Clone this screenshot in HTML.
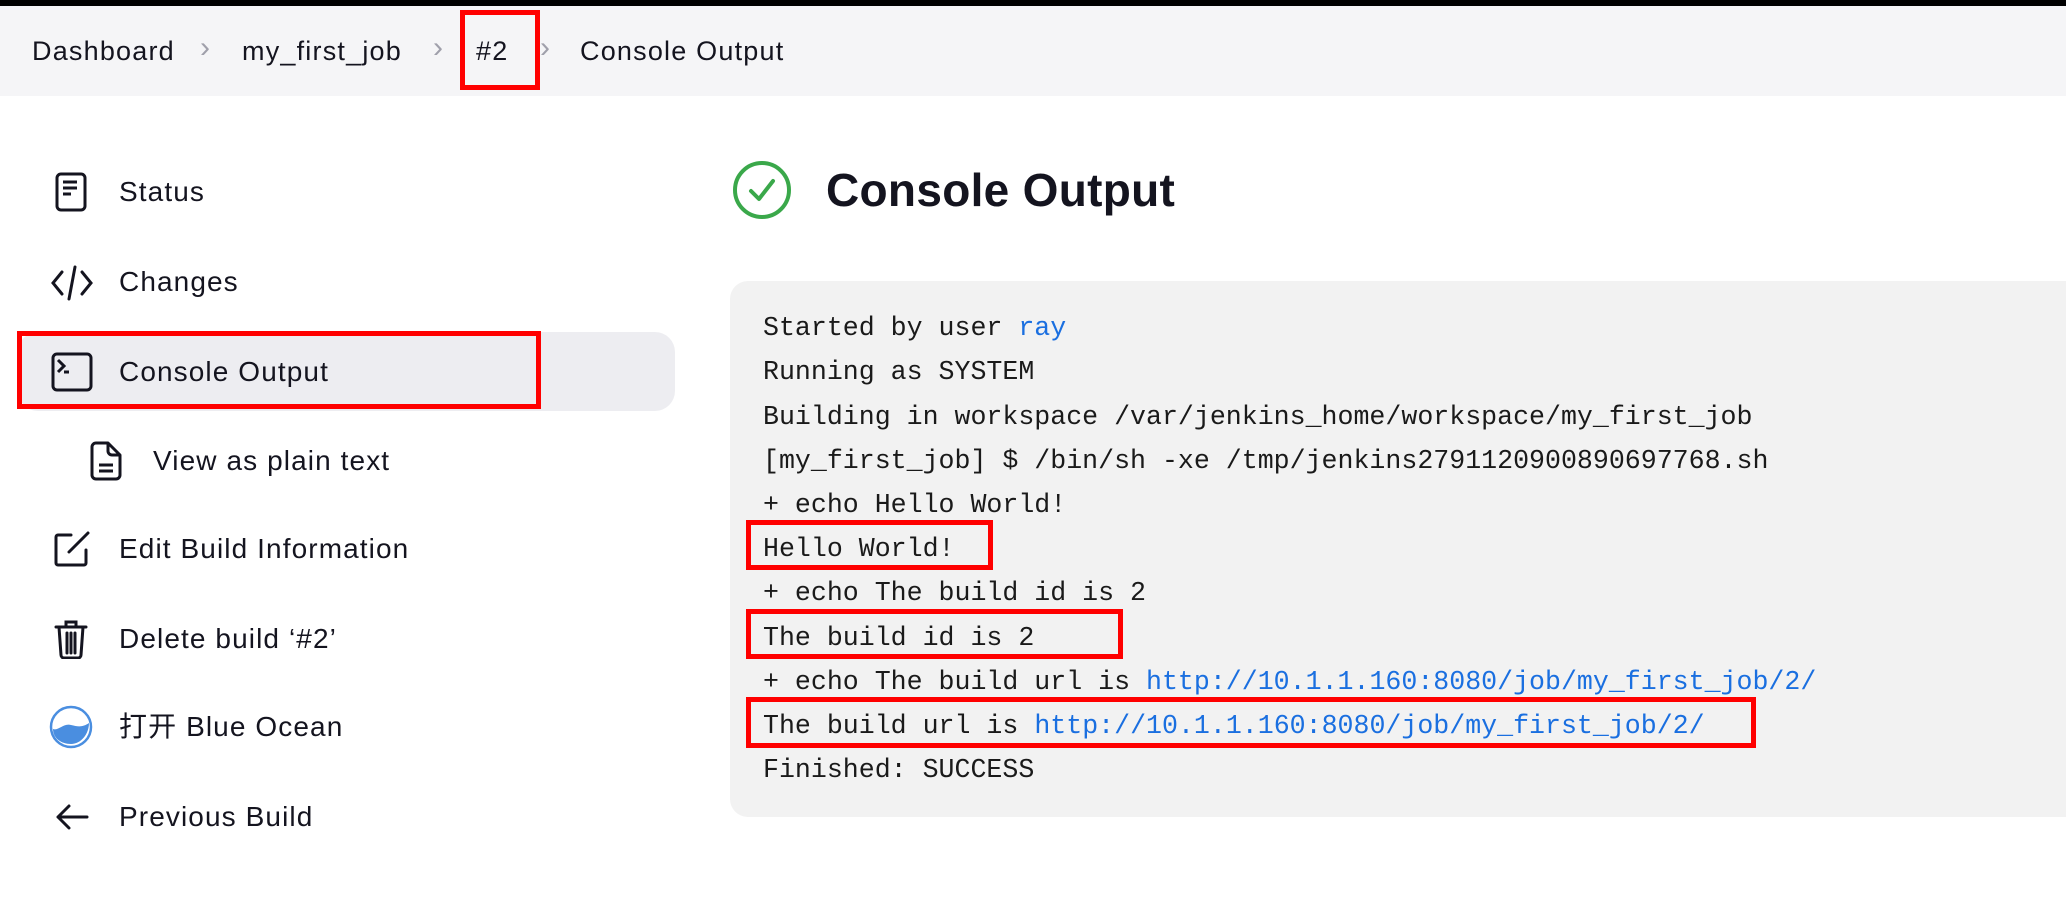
<!DOCTYPE html>
<html><head><meta charset="utf-8"><style>
*{margin:0;padding:0;box-sizing:border-box}
body{width:2066px;height:924px;background:#fff;position:relative;overflow:hidden;font-family:"Liberation Sans","Noto Sans CJK SC",sans-serif;color:#14141f}
.abs{position:absolute}
.top{left:0;top:0;width:2066px;height:6px;background:#000}
.bc{left:0;top:6px;width:2066px;height:90px;background:#f5f5f7}
.bct{font-size:27px;top:36px;position:absolute;line-height:30px;letter-spacing:1.2px}
.chev{color:#a0a0ab;font-size:30px;letter-spacing:0}
.red{position:absolute;border:5px solid #f00}
.item{position:absolute;left:119px;font-size:28px;line-height:34px;letter-spacing:1.1px}
.ico{position:absolute}
.cons{left:730px;top:281px;width:1400px;height:536px;background:#f2f2f2;border-radius:18px}
.ln{position:absolute;left:763px;font-family:"Liberation Mono","DejaVu Sans Mono",monospace;font-size:26.6px;line-height:30px;white-space:pre;color:#1a1a1a}
a{color:#1a6fe0;text-decoration:none}
</style></head><body>
<div class="abs top"></div>
<div class="abs bc"></div>
<div class="bct" style="left:32px">Dashboard</div>
<div class="bct chev" style="left:200px;top:33px">›</div>
<div class="bct" style="left:242px">my_first_job</div>
<div class="bct chev" style="left:433px;top:33px">›</div>
<div class="bct" style="left:476px">#2</div>
<div class="bct chev" style="left:540px;top:33px">›</div>
<div class="bct" style="left:580px">Console Output</div>
<div class="red" style="left:460px;top:10px;width:80px;height:80px"></div>

<div class="abs" style="left:18px;top:332px;width:657px;height:79px;background:#ededf1;border-radius:20px"></div>
<div class="red" style="left:17px;top:331px;width:524px;height:78px"></div>

<svg class="ico" style="left:55px;top:172px" width="32" height="40" viewBox="0 0 32 40" fill="none" stroke="#14141f" stroke-width="3"><rect x="2" y="2" width="28" height="36" rx="4"/><path d="M8 10h14M8 16h14M8 22h8"/></svg>
<div class="item" style="top:175px">Status</div>
<svg class="ico" style="left:50px;top:264px" width="44" height="38" viewBox="0 0 44 38" fill="none" stroke="#14141f" stroke-width="3" stroke-linecap="round"><path d="M12 8L3 19l9 11M32 8l9 11-9 11M25 3L19 35"/></svg>
<div class="item" style="top:265px">Changes</div>
<svg class="ico" style="left:51px;top:352px" width="42" height="40" viewBox="0 0 42 40" fill="none" stroke="#14141f" stroke-width="3"><rect x="2" y="2" width="38" height="36" rx="4"/><path d="M7 8l6 6-6 6M13 20h5"/></svg>
<div class="item" style="top:355px">Console Output</div>
<svg class="ico" style="left:90px;top:441px" width="32" height="40" viewBox="0 0 32 40" fill="none" stroke="#14141f" stroke-width="3" stroke-linejoin="round"><path d="M6 2h12l12 12v20a4 4 0 0 1-4 4H6a4 4 0 0 1-4-4V6a4 4 0 0 1 4-4z"/><path d="M18 2v8a4 4 0 0 0 4 4h8M9 24h14M9 30h14"/></svg>
<div class="item" style="left:153px;top:444px">View as plain text</div>
<svg class="ico" style="left:53px;top:530px" width="38" height="38" viewBox="0 0 38 38" fill="none" stroke="#14141f" stroke-width="3" stroke-linecap="round"><path d="M18 5H5a2 2 0 0 0-2 2v26a2 2 0 0 0 2 2h26a2 2 0 0 0 2-2V20"/><path d="M16 22L35 3"/></svg>
<div class="item" style="top:532px">Edit Build Information</div>
<svg class="ico" style="left:54px;top:619px" width="34" height="40" viewBox="0 0 34 40" fill="none" stroke="#14141f" stroke-width="3" stroke-linecap="round"><path d="M2 8h30M12 8V3h10v5M5 8l2 28a3 3 0 0 0 3 3h14a3 3 0 0 0 3-3l2-28M13 14v20M17 14v20M21 14v20"/></svg>
<div class="item" style="top:622px">Delete build ‘#2’</div>
<svg class="ico" style="left:49px;top:705px" width="44" height="44" viewBox="0 0 44 44"><circle cx="22" cy="22" r="20" fill="#fff" stroke="#4a8ee0" stroke-width="2.5"/><path d="M4 24c6 2 10-6 18-4s12 2 18-2c0 11-8 21-18 21S4 33 4 24z" fill="#4a8ee0"/></svg>
<div class="item" style="top:710px">打开 Blue Ocean</div>
<svg class="ico" style="left:55px;top:803px" width="34" height="28" viewBox="0 0 34 28" fill="none" stroke="#14141f" stroke-width="3" stroke-linecap="round" stroke-linejoin="round"><path d="M14 3L3 14l11 11M3 14h29"/></svg>
<div class="item" style="top:800px">Previous Build</div>

<svg class="ico" style="left:731px;top:159px" width="62" height="62" viewBox="0 0 62 62" fill="none" stroke="#3aa84a" stroke-width="4" stroke-linecap="round" stroke-linejoin="round"><circle cx="31" cy="31" r="27"/><path d="M20 32l8 8 14-18"/></svg>
<div class="abs" style="left:826px;top:163px;font-size:46px;font-weight:bold;line-height:54px;letter-spacing:0.3px">Console Output</div>

<div class="abs cons"></div>
<div class="ln" style="top:313px">Started by user <a>ray</a></div>
<div class="ln" style="top:357px">Running as SYSTEM</div>
<div class="ln" style="top:402px">Building in workspace /var/jenkins_home/workspace/my_first_job</div>
<div class="ln" style="top:446px">[my_first_job] $ /bin/sh -xe /tmp/jenkins2791120900890697768.sh</div>
<div class="ln" style="top:490px">+ echo Hello World!</div>
<div class="ln" style="top:534px">Hello World!</div>
<div class="ln" style="top:578px">+ echo The build id is 2</div>
<div class="ln" style="top:623px">The build id is 2</div>
<div class="ln" style="top:667px">+ echo The build url is <a>http://10.1.1.160:8080/job/my_first_job/2/</a></div>
<div class="ln" style="top:711px">The build url is <a>http://10.1.1.160:8080/job/my_first_job/2/</a></div>
<div class="ln" style="top:755px">Finished: SUCCESS</div>
<div class="red" style="left:746px;top:520px;width:247px;height:50px"></div>
<div class="red" style="left:746px;top:609px;width:377px;height:50px"></div>
<div class="red" style="left:746px;top:697px;width:1010px;height:51px"></div>
</body></html>
